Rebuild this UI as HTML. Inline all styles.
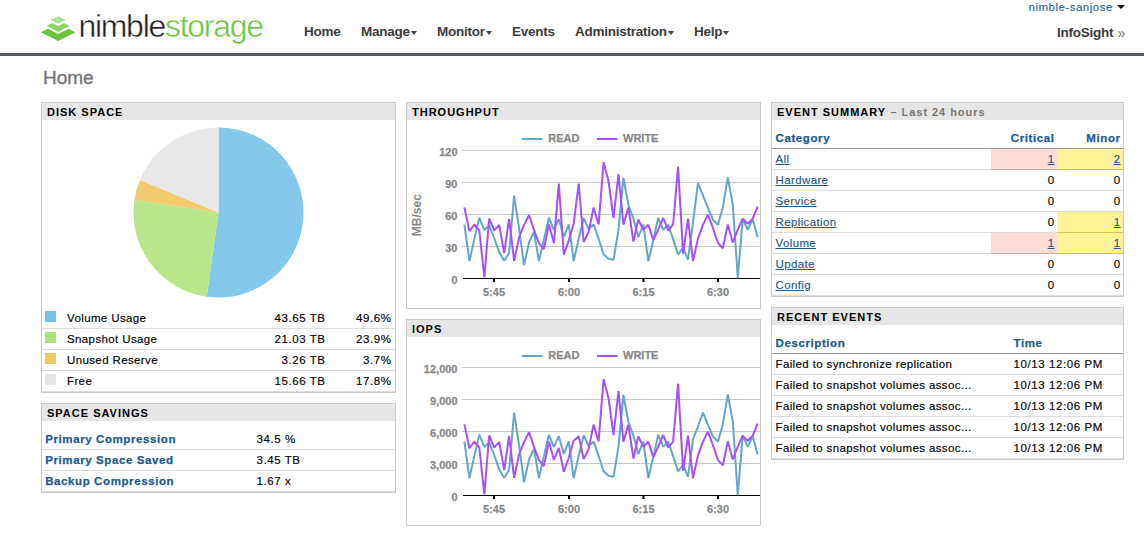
<!DOCTYPE html>
<html><head><meta charset="utf-8">
<style>
*{margin:0;padding:0;box-sizing:content-box}
html,body{width:1144px;height:538px;overflow:hidden;background:#fff}
body{position:relative;font-family:"Liberation Sans",sans-serif;color:#000}
.abs{position:absolute;white-space:nowrap}
.nav{position:absolute;top:24.4px;font-weight:bold;font-size:13.5px;line-height:16px;letter-spacing:-0.25px;color:#3b3b3b;white-space:nowrap}
.caret{display:inline-block;width:0;height:0;border-left:3.5px solid transparent;border-right:3.5px solid transparent;border-top:4px solid #444;vertical-align:1px;margin-left:1px}
.panel{position:absolute;border:1px solid #cacaca;background:#fff;overflow:hidden}
.ph{position:absolute;left:0;top:0;right:0;height:17px;background:#e6e6e6;font-weight:bold;font-size:11px;line-height:19px;letter-spacing:1.0px;padding-left:5px;color:#000}
.ph span{color:#777;letter-spacing:0.95px;margin-left:0.5px}
svg text{font-family:"Liberation Sans",sans-serif}
.lg{font-weight:bold;font-size:11px;fill:#888;stroke:#888;stroke-width:0.25px}
.yl{font-weight:bold;font-size:11px;fill:#888;stroke:#888;stroke-width:0.25px}
.t{position:absolute;font-size:11.5px;line-height:14px;letter-spacing:0.38px;white-space:nowrap;color:#000;-webkit-text-stroke:0.15px currentColor}
.n{letter-spacing:0.58px}
.b{font-weight:bold;color:#1d5a8f;letter-spacing:0.6px;-webkit-text-stroke:0.25px #1d5a8f}
.sep{position:absolute;height:1px;background:#dcdcdc}
.lnk{color:#1d5a8f;text-decoration:underline}
.sw{position:absolute;width:11px;height:11px}
</style></head><body>

<!-- header -->
<svg class="abs" style="left:0;top:0" width="80" height="50">
  <polygon points="40.9,32.3 58.2,23.65 75.5,32.3 58.2,40.95" fill="#6cc23c"/>
  <polygon points="42.4,26.1 58.2,18.2 74,26.1 58.2,34" fill="#fff"/>
  <polygon points="46.6,26.1 58.2,20.3 69.8,26.1 58.2,31.9" fill="#90d56a"/>
  <polygon points="46.2,20 58.2,14 70.2,20 58.2,26" fill="#fff"/>
  <polygon points="50.5,20 58.2,16.15 65.9,20 58.2,23.85" fill="#a9e18c"/>
</svg>
<div class="abs" id="logo" style="left:78.4px;top:8.4px;font-size:32px;line-height:36px;letter-spacing:-1.28px;-webkit-text-stroke:0.45px #fff;paint-order:normal"><span style="color:#231f20">nimble</span><span style="color:#6cc43e">storage</span></div>

<div class="nav" style="left:304px">Home</div>
<div class="nav" style="left:361px">Manage<span class="caret"></span></div>
<div class="nav" style="left:437px">Monitor<span class="caret"></span></div>
<div class="nav" style="left:512px">Events</div>
<div class="nav" style="left:575px">Administration<span class="caret"></span></div>
<div class="nav" style="left:694px">Help<span class="caret"></span></div>

<div class="abs" style="left:1028.5px;top:0px;font-size:11.5px;line-height:14px;letter-spacing:0.5px;color:#2767a0;-webkit-text-stroke:0.15px #2767a0">nimble-sanjose</div>
<div class="abs" style="left:1117px;top:5.2px;width:0;height:0;border-left:4.1px solid transparent;border-right:4.1px solid transparent;border-top:4.6px solid #000"></div>
<div class="nav" style="left:1057px;top:24.8px">InfoSight</div>
<div class="abs" style="left:1117.5px;top:24.5px;font-size:14px;line-height:16px;color:#777">&raquo;</div>

<div class="abs" style="left:0;top:53px;width:1144px;height:3px;background:#505b68"></div>

<div class="abs" style="left:43px;top:67px;font-size:19px;line-height:22px;color:#767676;-webkit-text-stroke:0.35px #767676">Home</div>

<!-- disk space -->
<div class="panel" style="left:41px;top:102px;width:353px;height:289px">
  <div class="ph">DISK SPACE</div>
  <svg width="353" height="200" style="position:absolute;left:0;top:0"><path d="M176.50,109.50 L176.50,24.50 A85,85 0 1 1 164.72,193.68 Z" fill="#84c8ec"/><path d="M176.50,109.50 L164.72,193.68 A85,85 0 0 1 92.44,96.90 Z" fill="#b9e68a"/><path d="M176.50,109.50 L92.44,96.90 A85,85 0 0 1 98.01,76.88 Z" fill="#f2ca6f"/><path d="M176.50,109.50 L98.01,76.88 A85,85 0 0 1 176.50,24.50 Z" fill="#e8e8e8"/></svg>
</div>

<div class="panel" style="left:406px;top:102px;width:353px;height:205px;">
<div class="ph">THROUGHPUT</div>
<svg width="353" height="205" style="position:absolute;left:0;top:0">
<line x1="115.0" y1="36.0" x2="135.5" y2="36.0" stroke="#63a6c9" stroke-width="2"/>
<text x="141.3" y="39.0" class="lg">READ</text>
<line x1="190.0" y1="36.0" x2="210.5" y2="36.0" stroke="#a650fa" stroke-width="2"/>
<text x="216.0" y="39.0" class="lg">WRITE</text>
<line x1="55.0" y1="47.5" x2="353.0" y2="47.5" stroke="#c8c8c8" stroke-width="1"/>
<text x="50.5" y="53.3" class="yl" text-anchor="end">120</text>
<line x1="55.0" y1="79.5" x2="353.0" y2="79.5" stroke="#c8c8c8" stroke-width="1"/>
<text x="50.5" y="85.3" class="yl" text-anchor="end">90</text>
<line x1="55.0" y1="111.5" x2="353.0" y2="111.5" stroke="#c8c8c8" stroke-width="1"/>
<text x="50.5" y="117.3" class="yl" text-anchor="end">60</text>
<line x1="55.0" y1="143.5" x2="353.0" y2="143.5" stroke="#c8c8c8" stroke-width="1"/>
<text x="50.5" y="149.3" class="yl" text-anchor="end">30</text>
<text x="50.5" y="181.3" class="yl" text-anchor="end">0</text>
<line x1="56.0" y1="175.5" x2="353.0" y2="175.5" stroke="#000" stroke-width="1.2"/>
<rect x="86.0" y="176.0" width="2" height="3" fill="#000"/>
<text x="87.0" y="193.0" class="yl" text-anchor="middle">5:45</text>
<rect x="161.0" y="176.0" width="2" height="3" fill="#000"/>
<text x="162.0" y="193.0" class="yl" text-anchor="middle">6:00</text>
<rect x="235.5" y="176.0" width="2" height="3" fill="#000"/>
<text x="236.5" y="193.0" class="yl" text-anchor="middle">6:15</text>
<rect x="310.0" y="176.0" width="2" height="3" fill="#000"/>
<text x="311.0" y="193.0" class="yl" text-anchor="middle">6:30</text>
<text class="yl" style="font-size:12px;stroke-width:0" transform="translate(14.0,112.2) rotate(-90)" text-anchor="middle">MB/sec</text>
<polyline fill="none" stroke="#63a6c9" stroke-width="2" stroke-linejoin="bevel" points="57.4,121.5 62.4,158.0 67.3,136.4 72.3,114.6 77.3,127.0 82.2,122.5 87.2,135.0 92.2,149.3 97.2,157.8 102.1,150.0 107.1,92.7 112.1,125.5 117.0,162.2 122.0,139.5 127.0,128.8 131.9,158.0 136.9,136.4 141.9,114.8 146.9,126.9 151.8,116.2 156.8,134.0 161.8,121.4 166.7,158.0 171.7,135.9 176.7,115.2 181.6,126.0 186.6,121.4 191.6,135.8 196.6,151.3 201.5,155.7 206.5,156.8 211.5,126.7 216.4,74.8 221.4,102.0 226.4,115.6 231.3,134.2 236.3,121.5 241.3,158.0 246.3,137.1 251.2,114.8 256.2,126.7 261.2,121.6 266.1,136.1 271.1,151.4 276.1,144.8 281.0,156.6 286.0,119.3 291.0,80.0 296.0,92.7 300.9,104.6 305.9,116.5 310.9,121.7 315.8,104.6 320.8,74.5 325.8,101.6 330.8,175.2 335.7,115.6 340.7,126.7 345.7,116.3 350.6,134.2"/>
<polyline fill="none" stroke="#a650fa" stroke-width="2" stroke-linejoin="bevel" points="57.4,104.4 62.4,128.2 67.3,121.5 72.3,127.5 77.3,174.3 82.2,115.5 87.2,127.6 92.2,121.8 97.2,150.2 102.1,116.0 107.1,157.8 112.1,134.4 117.0,122.1 122.0,112.1 127.0,126.9 131.9,140.1 136.9,146.0 141.9,121.5 146.9,139.9 151.8,80.6 156.8,151.7 161.8,137.5 166.7,120.8 171.7,80.6 176.7,139.1 181.6,129.0 186.6,104.6 191.6,121.5 196.6,59.2 201.5,78.0 206.5,115.0 211.5,71.1 216.4,121.7 221.4,104.6 226.4,138.6 231.3,116.5 236.3,126.9 241.3,121.7 246.3,137.1 251.2,126.7 256.2,115.0 261.2,127.6 266.1,121.7 271.1,63.7 276.1,150.6 281.0,115.7 286.0,158.1 291.0,135.4 296.0,121.6 300.9,111.6 305.9,125.0 310.9,139.8 315.8,145.3 320.8,121.5 325.8,139.4 330.8,126.7 335.7,115.6 340.7,120.8 345.7,115.6 350.6,103.7"/>
</svg></div>
<div class="panel" style="left:406px;top:319px;width:353px;height:205px;">
<div class="ph">IOPS</div>
<svg width="353" height="205" style="position:absolute;left:0;top:0">
<line x1="115.0" y1="36.0" x2="135.5" y2="36.0" stroke="#63a6c9" stroke-width="2"/>
<text x="141.3" y="39.0" class="lg">READ</text>
<line x1="190.0" y1="36.0" x2="210.5" y2="36.0" stroke="#a650fa" stroke-width="2"/>
<text x="216.0" y="39.0" class="lg">WRITE</text>
<line x1="55.0" y1="47.5" x2="353.0" y2="47.5" stroke="#c8c8c8" stroke-width="1"/>
<text x="50.5" y="53.3" class="yl" text-anchor="end">12,000</text>
<line x1="55.0" y1="79.5" x2="353.0" y2="79.5" stroke="#c8c8c8" stroke-width="1"/>
<text x="50.5" y="85.3" class="yl" text-anchor="end">9,000</text>
<line x1="55.0" y1="111.5" x2="353.0" y2="111.5" stroke="#c8c8c8" stroke-width="1"/>
<text x="50.5" y="117.3" class="yl" text-anchor="end">6,000</text>
<line x1="55.0" y1="143.5" x2="353.0" y2="143.5" stroke="#c8c8c8" stroke-width="1"/>
<text x="50.5" y="149.3" class="yl" text-anchor="end">3,000</text>
<text x="50.5" y="181.3" class="yl" text-anchor="end">0</text>
<line x1="56.0" y1="175.5" x2="353.0" y2="175.5" stroke="#000" stroke-width="1.2"/>
<rect x="86.0" y="176.0" width="2" height="3" fill="#000"/>
<text x="87.0" y="193.0" class="yl" text-anchor="middle">5:45</text>
<rect x="161.0" y="176.0" width="2" height="3" fill="#000"/>
<text x="162.0" y="193.0" class="yl" text-anchor="middle">6:00</text>
<rect x="235.5" y="176.0" width="2" height="3" fill="#000"/>
<text x="236.5" y="193.0" class="yl" text-anchor="middle">6:15</text>
<rect x="310.0" y="176.0" width="2" height="3" fill="#000"/>
<text x="311.0" y="193.0" class="yl" text-anchor="middle">6:30</text>
<polyline fill="none" stroke="#63a6c9" stroke-width="2" stroke-linejoin="bevel" points="57.4,121.5 62.4,158.0 67.3,136.4 72.3,114.6 77.3,127.0 82.2,122.5 87.2,135.0 92.2,149.3 97.2,157.8 102.1,150.0 107.1,92.7 112.1,125.5 117.0,162.2 122.0,139.5 127.0,128.8 131.9,158.0 136.9,136.4 141.9,114.8 146.9,126.9 151.8,116.2 156.8,134.0 161.8,121.4 166.7,158.0 171.7,135.9 176.7,115.2 181.6,126.0 186.6,121.4 191.6,135.8 196.6,151.3 201.5,155.7 206.5,156.8 211.5,126.7 216.4,74.8 221.4,102.0 226.4,115.6 231.3,134.2 236.3,121.5 241.3,158.0 246.3,137.1 251.2,114.8 256.2,126.7 261.2,121.6 266.1,136.1 271.1,151.4 276.1,144.8 281.0,156.6 286.0,119.3 291.0,106.3 296.0,92.7 300.9,104.6 305.9,116.5 310.9,121.7 315.8,104.6 320.8,74.5 325.8,101.6 330.8,175.2 335.7,115.6 340.7,126.7 345.7,116.3 350.6,134.2"/>
<polyline fill="none" stroke="#a650fa" stroke-width="2" stroke-linejoin="bevel" points="57.4,104.4 62.4,128.2 67.3,121.5 72.3,127.5 77.3,174.3 82.2,115.5 87.2,127.6 92.2,121.8 97.2,150.2 102.1,116.0 107.1,157.8 112.1,134.4 117.0,122.1 122.0,112.1 127.0,126.9 131.9,140.1 136.9,146.0 141.9,121.5 146.9,139.9 151.8,128.0 156.8,151.7 161.8,137.5 166.7,120.8 171.7,116.2 176.7,139.1 181.6,129.0 186.6,104.6 191.6,121.5 196.6,59.2 201.5,78.0 206.5,115.0 211.5,71.1 216.4,121.7 221.4,104.6 226.4,138.6 231.3,116.5 236.3,126.9 241.3,121.7 246.3,137.1 251.2,126.7 256.2,115.0 261.2,127.6 266.1,121.7 271.1,63.7 276.1,150.6 281.0,115.7 286.0,158.1 291.0,135.4 296.0,121.6 300.9,111.6 305.9,125.0 310.9,139.8 315.8,145.3 320.8,121.5 325.8,139.4 330.8,126.7 335.7,115.6 340.7,120.8 345.7,115.6 350.6,103.7"/>
</svg></div>


<!-- disk legend -->
<div class="sw" style="left:45px;top:311px;background:#74c0ea"></div>
<div class="sw" style="left:45px;top:332px;background:#aae27e"></div>
<div class="sw" style="left:45px;top:353px;background:#f2c766"></div>
<div class="sw" style="left:45px;top:374px;background:#e6e6e6"></div>
<div class="sep" style="left:42px;top:328px;width:353px"></div>
<div class="sep" style="left:42px;top:349px;width:353px"></div>
<div class="sep" style="left:42px;top:370px;width:353px"></div>
<div class="t" style="left:67px;top:311px">Volume Usage</div>
<div class="t" style="left:67px;top:332px">Snapshot Usage</div>
<div class="t" style="left:67px;top:353px">Unused Reserve</div>
<div class="t" style="left:67px;top:374px">Free</div>
<div class="t n" style="right:818.4px;top:311px">43.65 TB</div>
<div class="t n" style="right:818.4px;top:332px">21.03 TB</div>
<div class="t n" style="right:818.4px;top:353px">3.26 TB</div>
<div class="t n" style="right:818.4px;top:374px">15.66 TB</div>
<div class="t n" style="right:752.4px;top:311px">49.6%</div>
<div class="t n" style="right:752.4px;top:332px">23.9%</div>
<div class="t n" style="right:752.4px;top:353px">3.7%</div>
<div class="t n" style="right:752.4px;top:374px">17.8%</div>

<!-- space savings -->
<div class="panel" style="left:41px;top:403px;width:353px;height:88px">
  <div class="ph">SPACE SAVINGS</div>
</div>
<div class="sep" style="left:42px;top:449px;width:353px"></div>
<div class="sep" style="left:42px;top:470px;width:353px"></div>
<div class="t b" style="left:45.2px;top:432px">Primary Compression</div>
<div class="t b" style="left:45.2px;top:453px">Primary Space Saved</div>
<div class="t b" style="left:45.2px;top:474px">Backup Compression</div>
<div class="t n" style="left:256.5px;top:432px">34.5 %</div>
<div class="t n" style="left:256.5px;top:453px">3.45 TB</div>
<div class="t n" style="left:256.5px;top:474px">1.67 x</div>

<!-- event summary -->
<div class="panel" style="left:771px;top:102px;width:351px;height:193px">
  <div class="ph">EVENT SUMMARY <span>&ndash; Last 24 hours</span></div>
</div>
<div class="abs" style="left:991px;top:149px;width:66px;height:20px;background:#fddcd8"></div>
<div class="abs" style="left:1057px;top:149px;width:66px;height:20px;background:#fcf397"></div>
<div class="abs" style="left:1057px;top:212px;width:66px;height:20px;background:#fcf397"></div>
<div class="abs" style="left:991px;top:233px;width:66px;height:20px;background:#fddcd8"></div>
<div class="abs" style="left:1057px;top:233px;width:66px;height:20px;background:#fcf397"></div>
<div class="abs" style="left:772px;top:148px;width:351px;height:1px;background:#9a9a9a"></div>
<div class="sep" style="left:772px;top:169px;width:351px;background:#dcdcdc"></div>
<div class="sep" style="left:772px;top:190px;width:351px;background:#dcdcdc"></div>
<div class="sep" style="left:772px;top:211px;width:351px;background:#dcdcdc"></div>
<div class="sep" style="left:772px;top:232px;width:351px;background:#dcdcdc"></div>
<div class="sep" style="left:772px;top:253px;width:351px;background:#dcdcdc"></div>
<div class="sep" style="left:772px;top:274px;width:351px;background:#dcdcdc"></div>
<div class="abs" style="left:991px;top:169px;width:66px;height:1px;background:#dba8ab"></div>
<div class="abs" style="left:991px;top:253px;width:66px;height:1px;background:#dba8ab"></div>
<div class="abs" style="left:1057px;top:169px;width:66px;height:1px;background:#d6c457"></div>
<div class="abs" style="left:1057px;top:232px;width:66px;height:1px;background:#d6c457"></div>
<div class="abs" style="left:1057px;top:253px;width:66px;height:1px;background:#d6c457"></div>

<div class="t b" style="left:775.5px;top:131px">Category</div>
<div class="t b" style="right:89.4px;top:131px">Critical</div>
<div class="t b" style="right:23.4px;top:131px">Minor</div>
<div class="t lnk" style="left:775.5px;top:152px">All</div>
<div class="t lnk" style="left:775.5px;top:173px">Hardware</div>
<div class="t lnk" style="left:775.5px;top:194px">Service</div>
<div class="t lnk" style="left:775.5px;top:215px">Replication</div>
<div class="t lnk" style="left:775.5px;top:236px">Volume</div>
<div class="t lnk" style="left:775.5px;top:257px">Update</div>
<div class="t lnk" style="left:775.5px;top:278px">Config</div>
<div class="t n lnk" style="right:89.4px;top:152px">1</div>
<div class="t n" style="right:89.4px;top:173px">0</div>
<div class="t n" style="right:89.4px;top:194px">0</div>
<div class="t n" style="right:89.4px;top:215px">0</div>
<div class="t n lnk" style="right:89.4px;top:236px">1</div>
<div class="t n" style="right:89.4px;top:257px">0</div>
<div class="t n" style="right:89.4px;top:278px">0</div>
<div class="t n lnk" style="right:23.4px;top:152px">2</div>
<div class="t n" style="right:23.4px;top:173px">0</div>
<div class="t n" style="right:23.4px;top:194px">0</div>
<div class="t n lnk" style="right:23.4px;top:215px">1</div>
<div class="t n lnk" style="right:23.4px;top:236px">1</div>
<div class="t n" style="right:23.4px;top:257px">0</div>
<div class="t n" style="right:23.4px;top:278px">0</div>

<div class="sep" style="left:42px;top:391px;width:353px"></div>
<div class="sep" style="left:42px;top:491px;width:353px"></div>
<div class="sep" style="left:772px;top:295px;width:351px"></div>
<!-- recent events -->
<div class="panel" style="left:771px;top:307px;width:351px;height:151px">
  <div class="ph">RECENT EVENTS</div>
</div>
<div class="abs" style="left:772px;top:353px;width:351px;height:1px;background:#9a9a9a"></div>
<div class="sep" style="left:772px;top:374px;width:351px"></div>
<div class="sep" style="left:772px;top:395px;width:351px"></div>
<div class="sep" style="left:772px;top:416px;width:351px"></div>
<div class="sep" style="left:772px;top:437px;width:351px"></div>
<div class="sep" style="left:772px;top:458px;width:351px"></div>
<div class="t b" style="left:775.5px;top:336px">Description</div>
<div class="t b" style="left:1013.5px;top:336px">Time</div>
<div class="t" style="left:775.5px;top:357px">Failed to synchronize replication</div>
<div class="t" style="left:775.5px;top:378px">Failed to snapshot volumes assoc...</div>
<div class="t" style="left:775.5px;top:399px">Failed to snapshot volumes assoc...</div>
<div class="t" style="left:775.5px;top:420px">Failed to snapshot volumes assoc...</div>
<div class="t" style="left:775.5px;top:441px">Failed to snapshot volumes assoc...</div>
<div class="t n" style="left:1013.5px;top:357px">10/13 12:06 PM</div>
<div class="t n" style="left:1013.5px;top:378px">10/13 12:06 PM</div>
<div class="t n" style="left:1013.5px;top:399px">10/13 12:06 PM</div>
<div class="t n" style="left:1013.5px;top:420px">10/13 12:06 PM</div>
<div class="t n" style="left:1013.5px;top:441px">10/13 12:06 PM</div>

</body></html>
